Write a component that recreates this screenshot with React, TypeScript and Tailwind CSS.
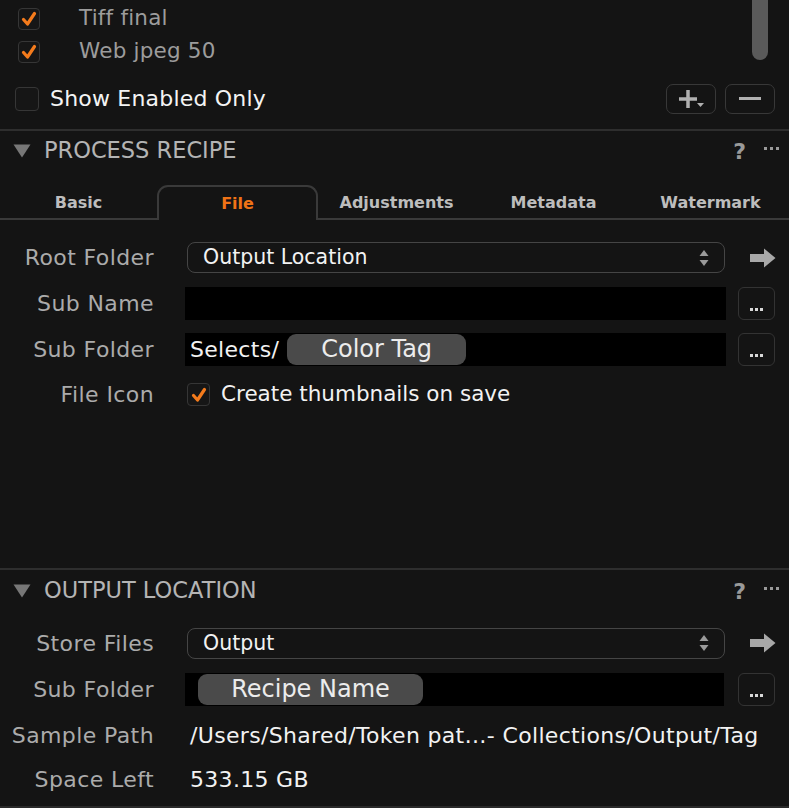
import type { ReactNode } from "react";

const FONT = { fontFamily: '"DejaVu Sans", "Liberation Sans", sans-serif' };

/* ---------- Small pieces ---------- */
function Check({ on, size = 22 }: { on: boolean; size?: number }) {
  return (
    <div
      className="flex items-center justify-center rounded-[4px] border-[1.5px] border-[#363636] bg-[#161616] flex-shrink-0"
      style={{ width: size, height: size }}
    >
      {on && (
        <svg width="16" height="16" viewBox="0 0 16 16">
          <path d="M2.5 8.5 L6.5 13 L13.5 2.5" fill="none" stroke="#f47b1c" strokeWidth="3.2" strokeLinecap="round" strokeLinejoin="round" />
        </svg>
      )}
    </div>
  );
}

function Triangle() {
  return (
    <svg width="18" height="14" viewBox="0 0 18 14">
      <path d="M0.5 0.5 H17.5 L9 13.5 Z" fill="#777" />
    </svg>
  );
}

function SectionHeader({ title, h }: { title: string; h: string }) {
  return (
    <div className={`flex items-center pl-[13px] pr-[10px] pt-[2px] ${h}`}>
      <Triangle />
      <span className="ml-[13px] text-[22.5px] text-[#b4b4b4]">{title}</span>
      <span className="ml-auto text-[22px] font-bold text-[#9a9a9a]">?</span>
      <span className="ml-[18px] flex gap-[3px] items-center -mt-[6px]">
        <span className="w-[3px] h-[3px] bg-[#9a9a9a]" />
        <span className="w-[3px] h-[3px] bg-[#9a9a9a]" />
        <span className="w-[3px] h-[3px] bg-[#9a9a9a]" />
      </span>
    </div>
  );
}

function Row({ label, h, children, right }: { label: string; h: string; children: ReactNode; right?: ReactNode }) {
  return (
    <div className={`flex items-center ${h}`}>
      <div className="w-[154px] text-right text-[22px] tracking-[0.4px] text-[#ababab] flex-shrink-0 whitespace-nowrap">{label}</div>
      <div className="ml-[31px] w-[541px] flex items-center">{children}</div>
      <div className="ml-[12px] w-[37px] flex items-center justify-end">{right}</div>
    </div>
  );
}

function SelectBox({ value }: { value: string }) {
  return (
    <div className="ml-[2px] mr-[1px] flex-1 h-[31px] rounded-[8px] border-[1.5px] border-[#454545] flex items-center pl-[15px] pr-[14px]">
      <span className="text-[20.5px] text-[#f2f2f2]">{value}</span>
      <svg className="ml-auto" width="12" height="20" viewBox="0 0 12 20">
        <path d="M6 2 L10.5 8 H1.5 Z" fill="#9a9a9a" />
        <path d="M6 18 L10.5 12 H1.5 Z" fill="#9a9a9a" />
      </svg>
    </div>
  );
}

function ArrowIcon() {
  return (
    <svg width="26" height="20" viewBox="0 0 26 20" className="-mr-[1px]">
      <path d="M0 6 H14 V0.5 L25.5 10 L14 19.5 V14 H0 Z" fill="#a8a8a8" />
    </svg>
  );
}

function DotsButton() {
  return (
    <div className="w-[37px] h-[33px] rounded-[6px] border-[1.5px] border-[#333] flex items-end justify-center pb-[8px]">
      <span className="flex gap-[2px]">
        <span className="w-[3px] h-[3px] bg-[#d8d8d8]" />
        <span className="w-[3px] h-[3px] bg-[#d8d8d8]" />
        <span className="w-[3px] h-[3px] bg-[#d8d8d8]" />
      </span>
    </div>
  );
}

function Token({ text, w }: { text: string; w: string }) {
  return (
    <div className={`${w} h-[31px] rounded-[9px] bg-[#4a4a4a] flex items-center justify-center text-[24px] text-[#ececec] flex-shrink-0`}>
      {text}
    </div>
  );
}

const TABS = ["Basic", "File", "Adjustments", "Metadata", "Watermark"];

/* ---------- Main ---------- */
export default function App() {
  return (
    <div className="w-[789px] h-[808px] bg-[#141414] overflow-hidden flex flex-col" style={FONT}>
      {/* Recipe list */}
      <div className="relative h-[129px] pt-[2px] flex-shrink-0">
        <div className="h-[33px] flex items-center pl-[18px]">
          <Check on />
          <span className="ml-[39px] text-[21.5px] tracking-[0.2px] text-[#9c9c9c]">Tiff final</span>
        </div>
        <div className="h-[33px] flex items-center pl-[18px]">
          <Check on />
          <span className="ml-[39px] text-[21.5px] tracking-[0.2px] text-[#9c9c9c]">Web jpeg 50</span>
        </div>
        <div className="h-[61px] flex items-center pl-[15px] pr-[14px]">
          <Check on={false} size={24} />
          <span className="ml-[11px] text-[22px] tracking-[0.2px] text-[#f4f4f4]">Show Enabled Only</span>
          <div className="ml-auto flex gap-[9px]">
            <div className="w-[50px] h-[30px] rounded-[7px] border-[1.5px] border-[#383838] flex items-center justify-center">
              <svg width="28" height="22" viewBox="0 0 28 22">
                <path d="M11 2 V20 M2 11 H20" stroke="#b0b0b0" strokeWidth="3.5" />
                <path d="M20 15 H27 L23.5 19 Z" fill="#b0b0b0" />
              </svg>
            </div>
            <div className="w-[50px] h-[30px] rounded-[7px] border-[1.5px] border-[#383838] flex items-center justify-center">
              <div className="w-[22px] h-[3.5px] bg-[#b0b0b0]" />
            </div>
          </div>
        </div>
        {/* scrollbar thumb */}
        <div className="absolute left-[752px] top-0 w-[16px] h-[60px] bg-[#5a5a5a] rounded-b-full" />
      </div>
      <div className="h-[2px] bg-[#2e2e2e] flex-shrink-0" />

      {/* Process recipe */}
      <SectionHeader title="PROCESS RECIPE" h="h-[38px]" />
      <div className="h-[51px] flex items-end flex-shrink-0">
        {TABS.map((t) =>
          t === "File" ? (
            <div
              key={t}
              className="flex-1 h-[35px] border-[2px] border-b-0 border-[#3a3a3a] rounded-t-[11px] flex items-center justify-center text-[16px] font-bold text-[#f07316]"
            >
              {t}
            </div>
          ) : (
            <div
              key={t}
              className="flex-1 h-[35px] pt-[3px] border-b-[2px] border-[#3a3a3a] flex items-center justify-center text-[16px] font-bold text-[#bdbdbd]"
            >
              {t}
            </div>
          )
        )}
      </div>
      <div className="pt-[15px] flex-shrink-0">
        <Row label="Root Folder" h="h-[45px]" right={<ArrowIcon />}>
          <SelectBox value="Output Location" />
        </Row>
        <Row label="Sub Name" h="h-[46px]" right={<DotsButton />}>
          <div className="flex-1 h-[33px] bg-black" />
        </Row>
        <Row label="Sub Folder" h="h-[46px]" right={<DotsButton />}>
          <div className="flex-1 h-[33px] bg-black flex items-center pl-[5px]">
            <span className="text-[22px] tracking-[0.3px] text-[#f2f2f2] mr-[8px]">Selects/</span>
            <Token text="Color Tag" w="w-[179px]" />
          </div>
        </Row>
        <Row label="File Icon" h="h-[45px]">
          <div className="ml-[2px] flex items-center">
            <Check on size={23} />
            <span className="ml-[11px] text-[21.5px] text-[#f2f2f2]">Create thumbnails on save</span>
          </div>
        </Row>
      </div>
      <div className="h-[151px] flex-shrink-0" />
      <div className="h-[2px] bg-[#2e2e2e] flex-shrink-0" />

      {/* Output location */}
      <SectionHeader title="OUTPUT LOCATION" h="h-[40px]" />
      <div className="pt-[10px] flex-shrink-0">
        <Row label="Store Files" h="h-[46px]" right={<ArrowIcon />}>
          <SelectBox value="Output" />
        </Row>
        <Row label="Sub Folder" h="h-[46px]" right={<DotsButton />}>
          <div className="flex-1 mr-[2px] h-[33px] bg-black flex items-center pl-[13px]">
            <Token text="Recipe Name" w="w-[225px]" />
          </div>
        </Row>
        <Row label="Sample Path" h="h-[47px]">
          <span className="ml-[5px] text-[22px] tracking-[0.33px] text-[#f2f2f2] whitespace-nowrap">
            /Users/Shared/Token pat…- Collections/Output/Tag
          </span>
        </Row>
        <Row label="Space Left" h="h-[40px]">
          <span className="ml-[5px] text-[22px] tracking-[0.3px] text-[#f2f2f2]">533.15 GB</span>
        </Row>
      </div>
      <div className="flex-1" />
      <div className="h-[2px] bg-[#2a2a2a] flex-shrink-0" />
    </div>
  );
}
